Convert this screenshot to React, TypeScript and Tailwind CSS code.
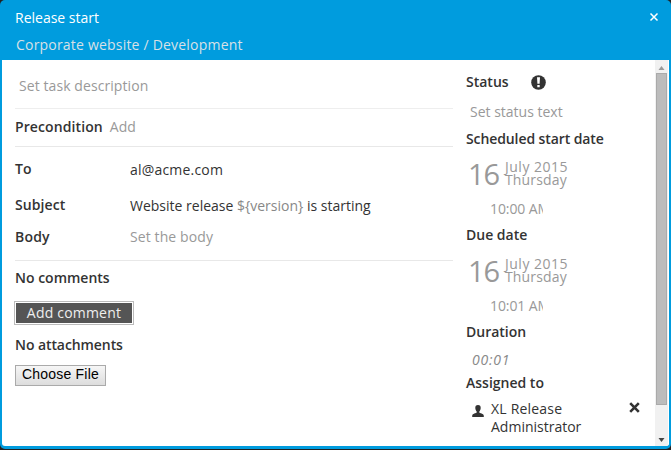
import React from "react";

function Heading({ children, className = "" }: { children: React.ReactNode; className?: string }) {
  return <h3 className={`whitespace-nowrap font-semibold text-[#333] ${className}`}>{children}</h3>;
}

function DateBlock({ time }: { time: string }) {
  return (
    <>
      <div className="flex h-[44px] items-center pl-[2px] text-[#999]">
        <span className="w-[37px] text-[29px] font-medium leading-[44px] tracking-[-1px]">16</span>
        <div className="whitespace-nowrap pb-[2px] text-[14px] leading-[13px]">
          <div className="tracking-[0.5px]">July 2015</div>
          <div className="tracking-[0.15px]">Thursday</div>
        </div>
      </div>
      <div className="flex h-[26px] items-center pl-[24px] text-[#999]">
        <span className="w-[53px] overflow-hidden whitespace-nowrap text-[14px] tracking-[-0.1px]">{time}</span>
      </div>
    </>
  );
}

export default function App() {
  return (
    <div className="h-[450px] w-[671px] bg-[#222] font-['Open_Sans','Noto_Sans',sans-serif] text-[14px] leading-[18px] text-[#333]">
      <div className="flex h-[449px] flex-col rounded-[5px] bg-[#009cde] px-[2px] pb-[3px]">
        <header className="flex h-[60px] shrink-0 justify-between pl-[13px] pr-[10px]">
          <div className="whitespace-nowrap pt-[9px]">
            <div className="h-[27px] font-medium text-white">Release start</div>
            <div className="pl-px tracking-[0.2px] text-[#d8e0e6]">Corporate website / Development</div>
          </div>
          <svg className="mt-[12px] h-[10px] w-[10px]" viewBox="0 0 10 10" stroke="#fff" strokeWidth="1.5">
            <path d="M1.5 1.5 8.5 8.5M8.5 1.5 1.5 8.5" />
          </svg>
        </header>
        <div className="flex h-[386px] overflow-hidden rounded-b-[3px] bg-white">
          <main className="ml-[13px] w-[438px] shrink-0 whitespace-nowrap">
            <div className="flex h-[49px] items-center border-b border-[#eee] pl-[4px] pt-[3px] tracking-[0.08px] text-[#999]">Set task description</div>
            <div className="flex h-[38px] items-center gap-[7px] border-b border-[#e8e8e8] pb-[2px]">
              <Heading className="tracking-[0.1px]">Precondition</Heading>
              <span className="text-[#999]">Add</span>
            </div>
            <div className="h-[114px] border-b border-[#e8e8e8] pt-[5px]">
              <div className="flex h-[36px] items-center">
                <Heading className="w-[115px] pb-[2px]">To</Heading>
                <span className="tracking-[0.2px]">al@acme.com</span>
              </div>
              <div className="flex h-[36px] items-center">
                <Heading className="w-[115px] pb-[2px] tracking-[0.1px]">Subject</Heading>
                <span>Website release <span className="text-[#888]">{"${version}"}</span> is starting</span>
              </div>
              <div className="flex h-[28px] items-center pb-[2px]">
                <Heading className="w-[115px] tracking-[0.2px]">Body</Heading>
                <span className="tracking-[0.1px] text-[#999]">Set the body</span>
              </div>
            </div>
            <Heading className="pt-[8px]">No comments</Heading>
            <button className="-ml-px mt-[14px] flex h-[24px] w-[120px] items-center justify-center border border-[#bbb] bg-[#555] tracking-[0.2px] text-[#eee] outline outline-1 -outline-offset-2 outline-white">Add comment</button>
            <Heading className="pt-[11px] tracking-[-0.08px]">No attachments</Heading>
            <button className="mt-[11px] flex h-[21px] w-[91px] items-center justify-center border border-[#aaa] bg-linear-to-b from-[#f6f6f6] to-[#ddd] pb-[3px] font-['Liberation_Sans',Arial,sans-serif] text-[14px] tracking-[0.2px] text-black">Choose File</button>
          </main>
          <aside className="ml-[13px] w-[189px] shrink-0 pt-[8px]">
            <div className="flex h-[29px] items-center pb-[2px]">
              <Heading className="w-[65px]">Status</Heading>
              <svg className="mt-px h-[15px] w-[15px]" viewBox="0 0 15 15">
                <circle cx="7.5" cy="7.5" r="7.3" fill="#333" />
                <path d="M6 2.3h3L8.6 8.7H6.4ZM6.3 10h2.4v2.3H6.3Z" fill="#fff" />
              </svg>
            </div>
            <div className="flex h-[29px] items-center pl-[4px] text-[#999]">Set status text</div>
            <Heading className="h-[26px] pt-[4px] tracking-[-0.1px]">Scheduled start date</Heading>
            <DateBlock time="10:00 AM" />
            <Heading className="h-[27px] pt-[4px]">Due date</Heading>
            <DateBlock time="10:01 AM" />
            <Heading className="h-[27px] pt-[4px]">Duration</Heading>
            <div className="flex h-[28px] items-center pl-[6px] tracking-[0.8px] italic text-[#888]">00:01</div>
            <Heading className="h-[26px]">Assigned to</Heading>
            <div className="flex">
              <svg className="ml-[6px] mt-[5px] h-[12px] w-[12px] shrink-0" viewBox="0 0 12 12" fill="#333">
                <path d="M6 0C4.1 0 3.2 1.2 3.3 3c.1 1.7.7 2.8 1.4 3.5v1.1C4.4 8.5.2 8.6.2 10.7V12h11.6v-1.3C11.8 8.6 7.6 8.5 7.3 7.6V6.5C8 5.8 8.6 4.7 8.7 3 8.8 1.2 7.9 0 6 0Z" />
              </svg>
              <div className="ml-[7px] w-[138px] whitespace-nowrap">
                <span className="tracking-[0.2px]">XL Release</span>
                <br />
                Administrator
              </div>
              <svg className="mt-[2px] h-[11px] w-[11px] shrink-0" viewBox="0 0 11 11" stroke="#333" strokeWidth="2.6">
                <path d="M1.2 1.2 9.8 9.8M9.8 1.2 1.2 9.8" />
              </svg>
            </div>
          </aside>
          <div className="flex w-[13px] shrink-0 flex-col items-center bg-[#f1f1f1]">
            <svg className="h-[13px] w-[13px] shrink-0" viewBox="0 0 13 13">
              <path d="M3.5 10 6.5 6l3 4Z" fill="#999" />
            </svg>
            <div className="h-[332px] w-[11px] shrink-0 border border-[#aaa] bg-[#bcbcbc]" />
            <svg className="mt-auto h-[13px] w-[13px] shrink-0" viewBox="0 0 13 13">
              <path d="M3.5 5h6L6.5 9Z" fill="#444" />
            </svg>
          </div>
          <div className="w-px bg-white" />
        </div>
      </div>
    </div>
  );
}
